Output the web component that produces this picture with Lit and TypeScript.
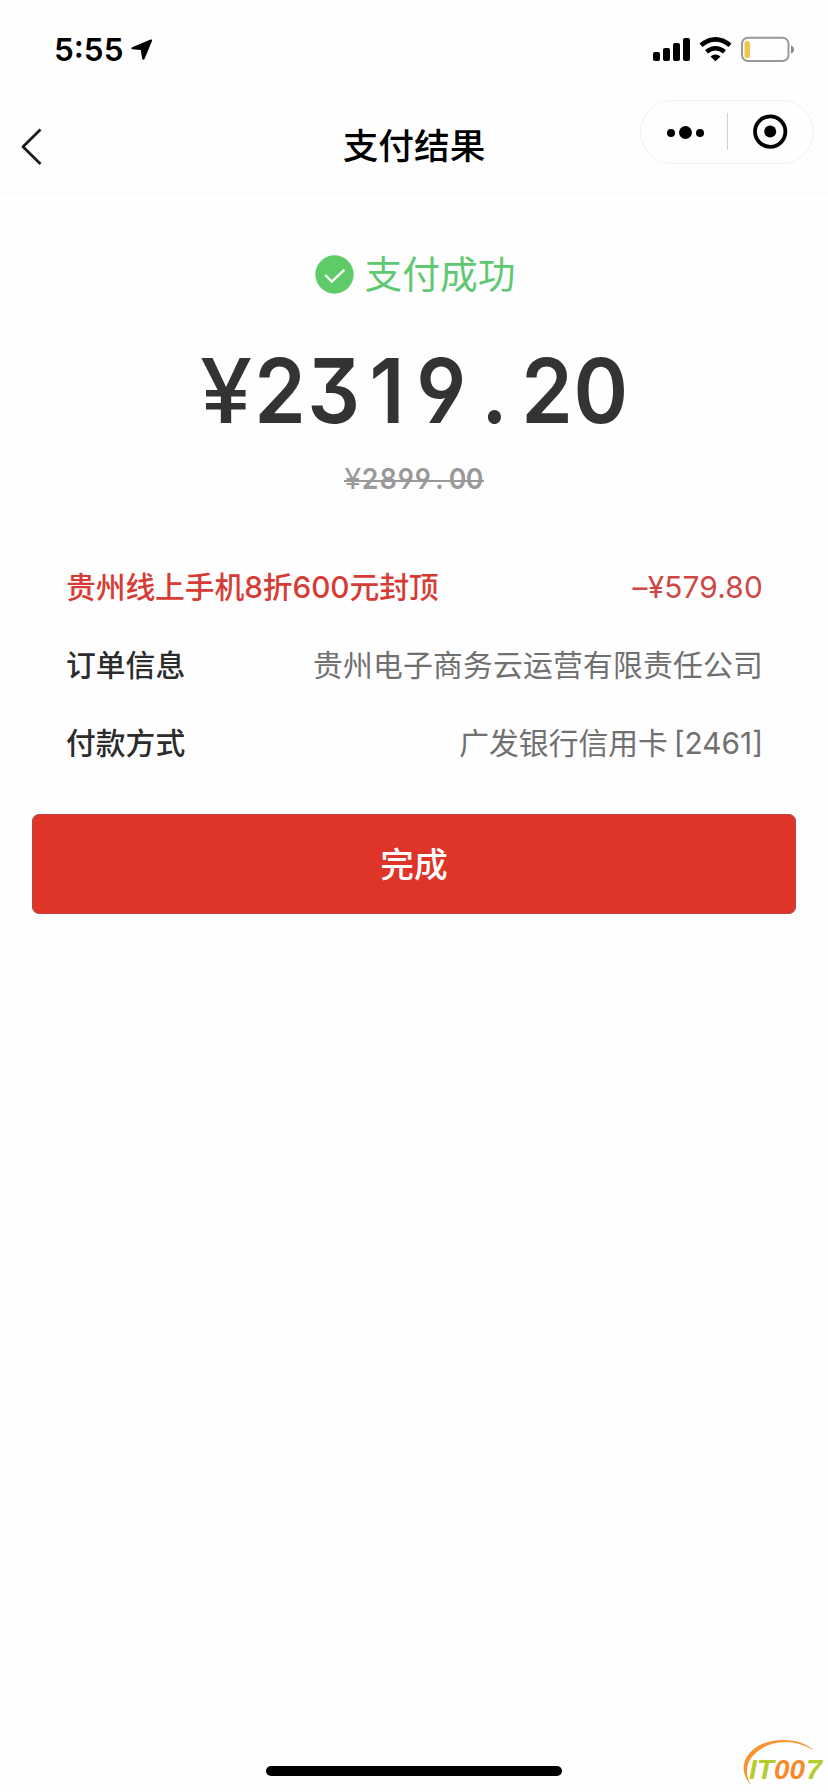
import { LitElement, html, css } from "lit";
import { customElement, property } from "lit/decorators.js";

@customElement("mono-amount")
class MonoAmount extends LitElement {
  @property() value = "";

  static styles = css`
    :host {
      display: flex;
      justify-content: center;
      font-family: Inter, "Liberation Sans", sans-serif;
      font-feature-settings: "ss01" 1, "cv09" 1;
    }
    .cell {
      display: flex;
      flex: none;
      justify-content: center;
      width: var(--pitch);
    }
    .glyph {
      transform: scaleX(0.92);
    }
    .glyph.yen {
      font-weight: var(--yen-weight);
      transform: translateX(-0.01em) scaleX(1.04);
    }
  `;

  render() {
    return [...this.value].map(
      (c) =>
        html`<span class="cell"><span class="glyph ${c === "¥" ? "yen" : ""}">${c}</span></span>`
    );
  }
}

@customElement("app-root")
class AppRoot extends LitElement {
  static styles = css`
    :host {
      display: flex;
      flex-direction: column;
      box-sizing: border-box;
      width: 828px;
      height: 1792px;
      background: #fefefe;
      color: #000;
      font-family: Inter, "Noto Sans CJK SC", sans-serif;
      overflow: hidden;
      position: relative;
    }
    svg {
      display: block;
      flex: none;
    }
    .status {
      display: flex;
      align-items: center;
      height: 100px;
      padding: 0 34px 0 54px;
      box-sizing: border-box;
    }
    .time {
      font-size: 31.5px;
      font-weight: 600;
      line-height: 40px;
      width: 77px;
    }
    .indicators {
      margin-left: auto;
    }
    .nav {
      display: grid;
      grid-template-columns: 1fr auto 1fr;
      height: 94px;
      box-sizing: border-box;
      border-bottom: 1px solid #f7f7f7;
    }
    .back {
      margin: 27px 0 0 20px;
    }
    .title {
      font-size: 35.7px;
      line-height: 50px;
      font-weight: 500;
      margin-top: 21px;
    }
    .capsule {
      display: flex;
      justify-self: end;
      box-sizing: border-box;
      width: 174px;
      height: 64px;
      margin-right: 14px;
      border: 1px solid #f0f0f0;
      border-radius: 32px;
    }
    .result {
      display: flex;
      justify-content: center;
      align-items: center;
      gap: 11px;
      height: 56px;
      margin-top: 52px;
      padding-left: 2px;
      color: #5fc871;
      font-size: 37.7px;
      line-height: 58px;
    }
    .paid {
      --pitch: 53.4px;
      --yen-weight: 500;
      height: 100px;
      margin-top: 39px;
      margin-bottom: 1px;
      font-size: 90px;
      line-height: 100px;
      font-weight: 600;
      color: #333;
    }
    .original {
      --pitch: 17.4px;
      --yen-weight: 400;
      position: relative;
      height: 36px;
      margin: 19px auto 0;
      width: 140px;
      font-size: 29px;
      line-height: 36px;
      font-weight: 600;
      color: #999;
    }
    .strike {
      position: absolute;
      left: 0;
      right: 0;
      top: 19px;
      height: 2px;
      background: #999;
    }
    .details {
      display: flex;
      flex-direction: column;
      padding: 0 66px;
      margin-top: 51px;
    }
    .row {
      display: flex;
      justify-content: space-between;
      height: 78px;
      line-height: 78px;
      font-size: 29.8px;
    }
    .label {
      font-weight: 500;
      color: #2c2c2c;
    }
    .value {
      color: #707070;
      font-weight: 400;
      letter-spacing: 0.2px;
      margin-right: -1px;
    }
    .promo .label {
      color: #d63c35;
      letter-spacing: -0.1px;
    }
    .promo .value {
      color: #cf4744;
      letter-spacing: 0.2px;
    }
    .card {
      letter-spacing: 0;
      word-spacing: -2.5px;
    }
    .done {
      display: block;
      width: 764px;
      height: 100px;
      margin: 32px 32px 0;
      padding: 2px 0 0;
      border: 1px solid #b8433f;
      border-radius: 7px;
      background: #df3428;
      color: #fff;
      font: 500 33.7px / 96px Inter, "Noto Sans CJK SC", sans-serif;
    }
    .home {
      width: 296px;
      height: 10px;
      margin: auto auto 16px 266px;
      border-radius: 5px;
      background: #000;
    }
    .badge {
      position: absolute;
      right: 0;
      bottom: 0;
    }
    .badge text {
      font: italic 700 28px "Liberation Sans", sans-serif;
    }
  `;

  render() {
    return html`
      <div class="status">
        <span class="time">5:55</span>
        <svg width="22" height="22" viewBox="0 0 22 22">
          <path
            d="M19.600.5 1.200 8.200C0 8.700.1 10.200 1.400 10.300L9.800 11 11.100 19.600C11.300 21 13 21 13.500 19.900L21 2C21.400.8 20.600.1 19.600.5Z"
          />
        </svg>
        <svg class="indicators" width="142" height="28" viewBox="652 36 142 28">
          <rect x="653" y="52" width="7" height="9" rx="2" />
          <rect x="663" y="48" width="7" height="13" rx="2" />
          <rect x="673" y="43" width="7" height="18" rx="2" />
          <rect x="683" y="38" width="7" height="23" rx="2" />
          <g fill="none" stroke="#000">
            <path d="M701 45.200Q715.500 33.500 730 45.200" stroke-width="4.600" />
            <path d="M706.500 51.700Q715.500 44.600 724.500 51.700" stroke-width="4.400" />
          </g>
          <path d="M710.500 56.600Q715.500 52.500 720.500 56.600L715.500 61.300Z" />
          <rect x="742" y="37.800" width="46.500" height="23.200" rx="6" fill="none" stroke="#999" stroke-width="2" />
          <rect x="744.500" y="41" width="5.500" height="17" rx="2.300" fill="#edc64f" />
          <path d="M791 45.500Q794 46.500 794 49.500T791 53.500Z" fill="#888" />
        </svg>
      </div>
      <div class="nav">
        <svg class="back" width="24" height="40" viewBox="0 0 24 40">
          <path d="M20.500 2.500 3 19.700 20.500 37" fill="none" stroke="#1c1c1c" stroke-width="2.800" stroke-linejoin="round" />
        </svg>
        <span class="title">支付结果</span>
        <div class="capsule">
          <svg width="172" height="62" viewBox="641 101 172 62">
            <circle cx="671" cy="133" r="4" />
            <circle cx="685.500" cy="132.500" r="6.500" />
            <circle cx="700" cy="133" r="4" />
            <path d="M727.500 113V150" stroke="#d0d0d0" />
            <circle cx="770.200" cy="131.600" r="15.200" fill="none" stroke="#000" stroke-width="3.800" />
            <circle cx="770.200" cy="131.600" r="6" />
          </svg>
        </div>
      </div>
      <div class="result">
        <svg width="39" height="39" viewBox="0 0 39 39">
          <circle cx="19.500" cy="19.500" r="19.200" fill="#5fcb68" />
          <path d="M10.200 20 16.800 26.600 29.300 14.800" fill="none" stroke="#fff" stroke-width="2.300" />
        </svg>
        <span>支付成功</span>
      </div>
      <mono-amount class="paid" value="¥2319.20"></mono-amount>
      <div class="original">
        <mono-amount value="¥2899.00"></mono-amount>
        <span class="strike"></span>
      </div>
      <div class="details">
        <div class="row promo">
          <span class="label">贵州线上手机8折600元封顶</span>
          <span class="value">–¥579.80</span>
        </div>
        <div class="row">
          <span class="label">订单信息</span>
          <span class="value">贵州电子商务云运营有限责任公司</span>
        </div>
        <div class="row">
          <span class="label">付款方式</span>
          <span class="value card">广发银行信用卡 [2461]</span>
        </div>
      </div>
      <button class="done">完成</button>
      <div class="home"></div>
      <svg class="badge" width="88" height="56" viewBox="740 1736 88 56">
        <path
          d="M751 1785C739 1772 742 1756 758 1746C776 1736 804 1739 814 1751C798 1740 776 1739 761 1749C747 1758 743 1771 751 1785Z"
          fill="#f79332"
        />
        <text x="749" y="1779" fill="#b5cc2e" textLength="25" lengthAdjust="spacingAndGlyphs">IT</text>
        <text x="774" y="1779" fill="#f58a2c" textLength="31" lengthAdjust="spacingAndGlyphs">00</text>
        <text x="806" y="1779" fill="#b5cc2e" textLength="16" lengthAdjust="spacingAndGlyphs">7</text>
      </svg>
    `;
  }
}
